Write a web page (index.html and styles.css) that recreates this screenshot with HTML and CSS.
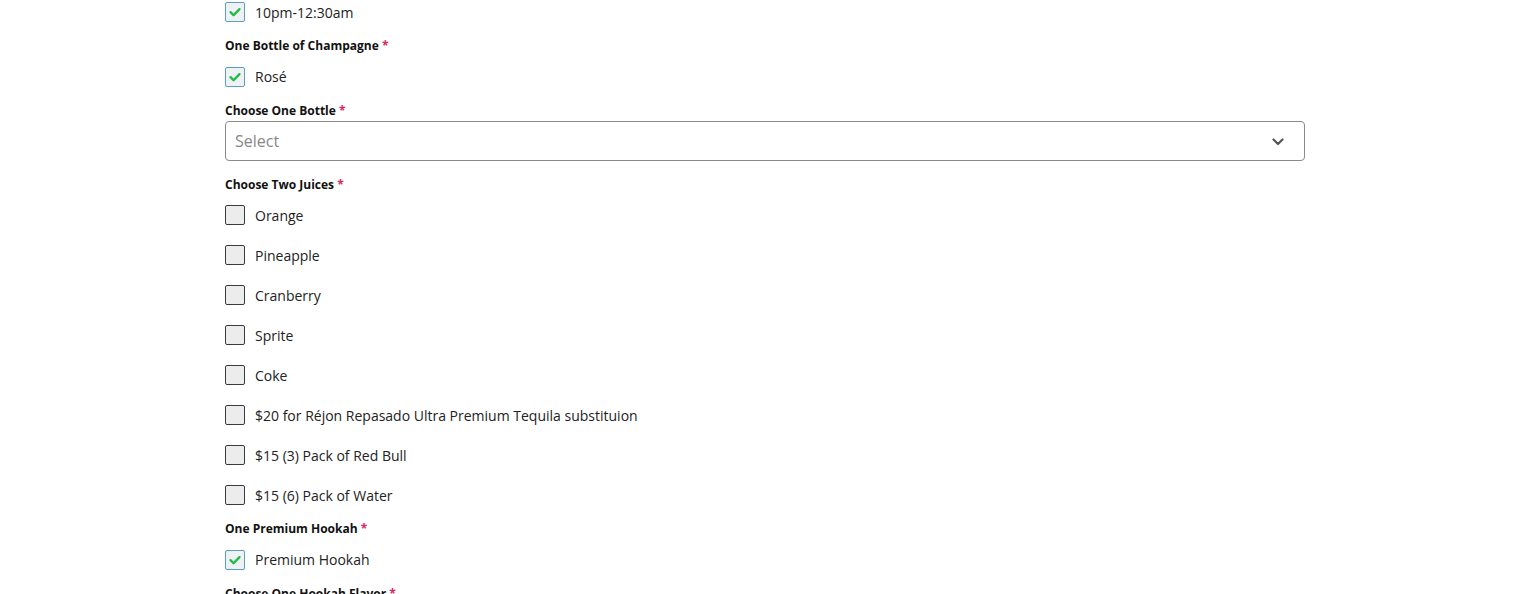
FILE: index.html
```html
<!DOCTYPE html>
<html lang="en">
<head>
<meta charset="UTF-8">
<title>Bottle Package</title>
<link rel="stylesheet" href="styles.css">
</head>
<body>
<form class="order-form">

  <!-- time slot (tail of the previous group) -->
  <div class="field field-tail">
    <div class="options">
      <label class="opt"><span class="box checked"><svg viewBox="0 0 20 20"><path d="M5 10.2l3.4 3.4L15 6.8"/></svg></span>10pm-12:30am</label>
    </div>
  </div>

  <div class="field">
    <div class="field-label">One Bottle of Champagne <span class="req">*</span></div>
    <div class="options">
      <label class="opt"><span class="box checked"><svg viewBox="0 0 20 20"><path d="M5 10.2l3.4 3.4L15 6.8"/></svg></span>Rosé</label>
    </div>
  </div>

  <div class="field">
    <div class="field-label">Choose One Bottle <span class="req">*</span></div>
    <div class="select">
      <span class="placeholder">Select</span>
      <svg class="chev" viewBox="0 0 12 8"><path d="M1.5 1.5L6 6l4.5-4.5"/></svg>
    </div>
  </div>

  <div class="field">
    <div class="field-label">Choose Two Juices <span class="req">*</span></div>
    <div class="options">
      <label class="opt"><span class="box"></span>Orange</label>
      <label class="opt"><span class="box"></span>Pineapple</label>
      <label class="opt"><span class="box"></span>Cranberry</label>
      <label class="opt"><span class="box"></span>Sprite</label>
      <label class="opt"><span class="box"></span>Coke</label>
      <label class="opt"><span class="box"></span>$20 for Réjon Repasado Ultra Premium Tequila substituion</label>
      <label class="opt"><span class="box"></span>$15 (3) Pack of Red Bull</label>
      <label class="opt"><span class="box"></span>$15 (6) Pack of Water</label>
    </div>
  </div>

  <div class="field">
    <div class="field-label">One Premium Hookah <span class="req">*</span></div>
    <div class="options">
      <label class="opt"><span class="box checked"><svg viewBox="0 0 20 20"><path d="M5 10.2l3.4 3.4L15 6.8"/></svg></span>Premium Hookah</label>
    </div>
  </div>

  <div class="field">
    <div class="field-label">Choose One Hookah Flavor <span class="req">*</span></div>
  </div>

</form>
</body>
</html>
```

FILE: styles.css
```css
*{box-sizing:border-box;margin:0;padding:0}
html,body{height:100%}
body{font-family:'Open Sans',sans-serif;background:#fff;color:#111;overflow:hidden}

.order-form{width:1080px;margin:0 auto;padding-top:2px}

/* ---------- fields ---------- */
.field{margin-bottom:14px}
.field-tail .options{padding-top:0}
.field-label{font-size:12px;font-weight:700;line-height:18px;padding-top:1px;margin-bottom:1px;color:#111}
.req{color:#d8285a}

/* ---------- checkboxes ---------- */
.options{display:flex;flex-direction:column;gap:20px;padding-top:10.5px}
.opt{display:flex;align-items:center;height:20px;font-size:14px;color:#222;cursor:pointer}
.box{width:20px;height:20px;margin-right:10px;flex:none;border:1px solid #3a3a3a;border-radius:2px;background:#ececec;display:flex}
.box.checked{border-color:#5a9fc0;background:#eef2f5}
.box svg{width:18px;height:18px}
.box path{fill:none;stroke:#22bb44;stroke-width:2.6;stroke-linecap:round;stroke-linejoin:round}

/* ---------- select ---------- */
.select{height:40px;border:1px solid #8a8a8a;border-radius:4px;display:flex;align-items:center;justify-content:space-between;padding:0 20px 0 9px}
.placeholder{font-size:16px;color:#888}
.chev{width:12px;height:8px;margin-top:3px}
.chev path{fill:none;stroke:#555;stroke-width:2.2;stroke-linecap:round;stroke-linejoin:round}
```
